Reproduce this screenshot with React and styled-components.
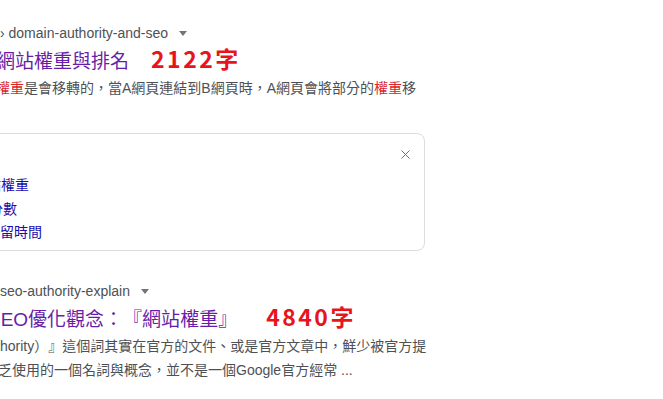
import React from 'react'
import styled, { createGlobalStyle } from 'styled-components'
import { X } from 'lucide-react'

const GlobalStyle = createGlobalStyle`
  html, body {
    margin: 0;
    padding: 0;
    background: #ffffff;
    overflow: hidden;
  }
  body {
    font-family: "Liberation Sans", Arial, "Noto Sans CJK TC", sans-serif;
    color: #4d5156;
    text-spacing-trim: space-all;
  }
`;

export default function App() {
    return (
        <>
            <GlobalStyle />
            <Page>
                <Result>
                    <Crumb>
                        › domain-authority-and-seo
                        <Caret />
                    </Crumb>
                    <Title $shift={-4}>
                        網站權重與排名
                        <WordCount $gap={22}>2122字</WordCount>
                    </Title>
                    <Snippet $shift={-4} $first>
                        <Mark>權重</Mark>是會移轉的，當A網頁連結到B網頁時，A網頁會將部分的<Mark>權重</Mark>移
                    </Snippet>
                </Result>

                <Panel>
                    <PanelHead>
                        <CloseButton aria-label="close">
                            <X size={15} strokeWidth={1.6} />
                        </CloseButton>
                    </PanelHead>
                    <PanelList>
                        <PanelItem $shift={-28}>網站權重</PanelItem>
                        <PanelItem $shift={-12}>分數</PanelItem>
                        <PanelItem $shift={-15}>停留時間</PanelItem>
                    </PanelList>
                </Panel>

                <Result $gap={30}>
                    <Crumb>
                        seo-authority-explain
                        <Caret />
                    </Crumb>
                    <Title $shift={-12}>
                        SEO優化觀念：『網站權重』
                        <WordCount $gap={29}>4840字</WordCount>
                    </Title>
                    <Snippet $shift={-21} $first>
                        Authority）』這個詞其實在官方的文件、或是官方文章中，鮮少被官方提
                    </Snippet>
                    <Snippet $shift={-2}>
                        乏使用的一個名詞與概念，並不是一個Google官方經常 ...
                    </Snippet>
                </Result>
            </Page>
        </>
    )
}

const Page = styled.div`
  width: 663px;
  height: 399px;
  padding-top: 23px;
  box-sizing: border-box;
  display: flex;
  flex-direction: column;
`;
const Result = styled.div`
  display: flex;
  flex-direction: column;
  margin-top: ${p => p.$gap || 0}px;
`;
const Crumb = styled.div`
  display: flex;
  align-items: center;
  height: 20px;
  font-size: 14px;
  line-height: 20px;
  color: #4d5156;
  white-space: nowrap;
`;
const Caret = styled.span`
  width: 0;
  height: 0;
  margin-left: 11px;
  margin-top: 1px;
  border-left: 4.5px solid transparent;
  border-right: 4.5px solid transparent;
  border-top: 5px solid #70757a;
`;
const Title = styled.div`
  margin-top: 1px;
  margin-left: ${p => p.$shift || 0}px;
  height: 28px;
  line-height: 28px;
  font-size: 19px;
  color: #681da8;
  white-space: nowrap;
`;
const WordCount = styled.span`
  margin-left: ${p => p.$gap}px;
  font-family: "Noto Sans CJK TC", sans-serif;
  font-size: 23px;
  font-weight: 700;
  letter-spacing: 2.5px;
  color: #e8141c;
`;
const Snippet = styled.div`
  margin-top: ${p => (p.$first ? 6 : 3)}px;
  margin-left: ${p => p.$shift || 0}px;
  font-size: 14px;
  line-height: 21px;
  color: #4d5156;
  white-space: nowrap;
`;
const Mark = styled.span`
  color: #d9262b;
`;
const Panel = styled.div`
  margin-top: 34px;
  margin-left: -30px;
  width: 455px;
  height: 118px;
  box-sizing: border-box;
  border: 1px solid #dadce0;
  border-radius: 8px;
  display: flex;
  flex-direction: column;
`;
const PanelHead = styled.div`
  height: 40px;
  display: flex;
  align-items: center;
  justify-content: flex-end;
  padding-right: 11px;
`;
const CloseButton = styled.button`
  border: none;
  background: none;
  padding: 0;
  display: flex;
  color: #70757a;
`;
const PanelList = styled.div`
  display: flex;
  flex-direction: column;
  padding-left: 30px;
`;
const PanelItem = styled.div`
  margin-left: ${p => p.$shift || 0}px;
  font-size: 14px;
  line-height: 23.5px;
  color: #1a0dab;
  white-space: nowrap;
`;
